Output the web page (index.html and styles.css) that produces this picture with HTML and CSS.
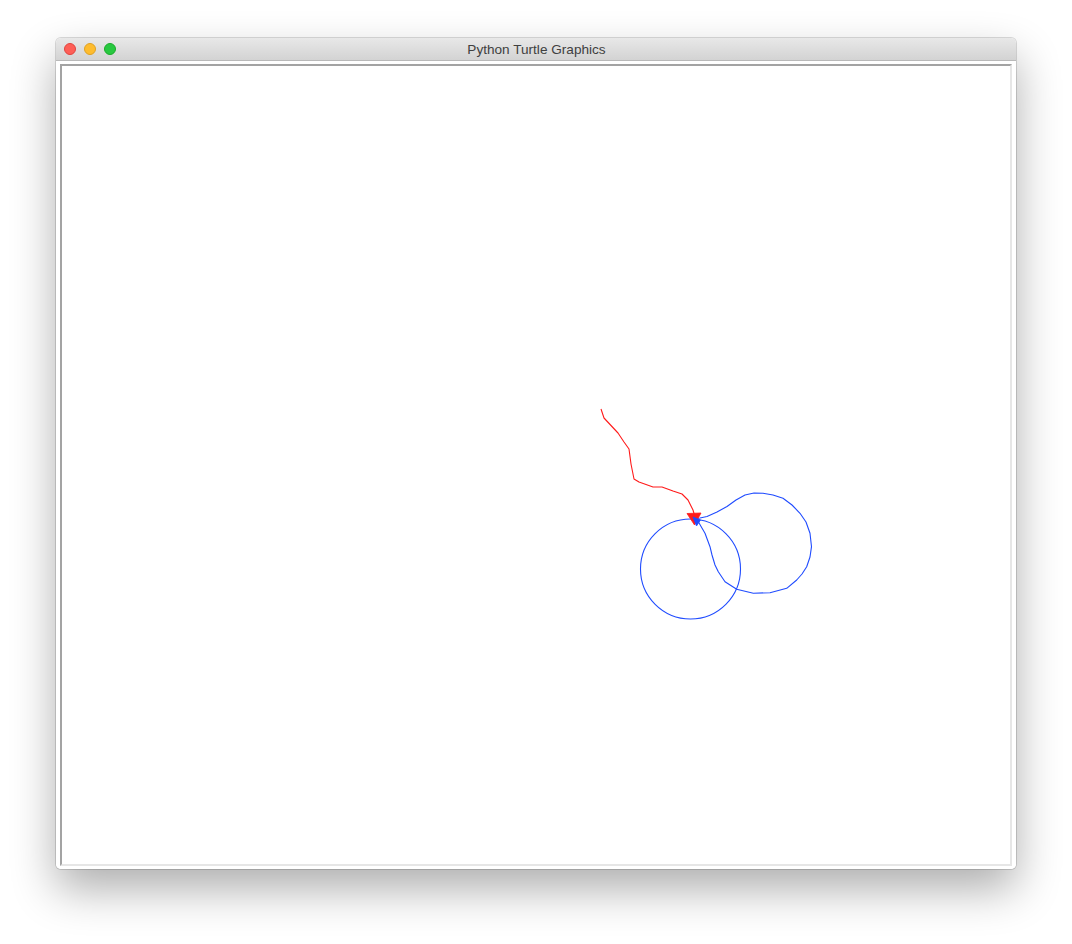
FILE: index.html
```html
<!DOCTYPE html>
<html>
<head>
<meta charset="utf-8">
<link rel="stylesheet" href="styles.css">
</head>
<body>
<div class="window">
  <div class="titlebar">
    <div class="lights">
      <span class="light close"></span>
      <span class="light min"></span>
      <span class="light max"></span>
    </div>
    <div class="title">Python Turtle Graphics</div>
  </div>
  <div class="body">
    <div class="canvas">
      <svg class="drawing" width="948" height="799" viewBox="62 65 948 799" xmlns="http://www.w3.org/2000/svg">
        <polyline class="red" points="601,409 604,418 618,433 624,442 629,449 631,464 634,479 639,482 653,487 662,487 673,491 682,494 688,500 693,510 695,517"/>
        <circle class="blue" cx="690.5" cy="569" r="50"/>
        <polyline class="blue" points="694,519 700,518 707,516.5 717,512 727,506.5 736,500 745,495 754,493 763,493.3 773,495 783,498.3 792,505 800,513.3 806,522 810,533.3 811.5,546.7 810,557 806.7,566.7 802,574 796.7,580 786.7,588.3 770,592.7 753.3,593.3 736.7,589.3 725,581.7 718.3,571.7 715,565 712,555 710,546.7 705,533.3 698.3,521.7"/>
        <polygon class="redfill" points="687,513.5 701,513 694.5,525"/>
        <polygon class="bluefill" points="693,517 700.5,520 696.5,526"/>
      </svg>
    </div>
  </div>
</div>
</body>
</html>
```

FILE: styles.css
```css
html, body {
  margin: 0;
  padding: 0;
  background: #ffffff;
}
body {
  padding: 38px 0 0 56px;
  height: 944px;
  box-sizing: border-box;
  overflow: hidden;
}
.window {
  width: 960px;
  height: 831px;
  border-radius: 5px;
  background: #ffffff;
  box-shadow: 0 20px 45px rgba(0, 0, 0, 0.32), 0 0 0 1px rgba(0, 0, 0, 0.14);
  display: flex;
  flex-direction: column;
  overflow: hidden;
}
.titlebar {
  height: 22px;
  flex: none;
  background: linear-gradient(#e8e8e8, #d3d3d3);
  border-bottom: 1px solid #b9b9b9;
  display: flex;
  align-items: center;
  position: relative;
}
.lights {
  display: flex;
  gap: 8px;
  padding-left: 8px;
  position: absolute;
  left: 0;
  top: 5px;
}
.light {
  width: 12px;
  height: 12px;
  border-radius: 50%;
  box-sizing: border-box;
}
.close { background: #fe5f57; border: 1px solid #e0443e; }
.min { background: #febc2e; border: 1px solid #dea123; }
.max { background: #28c840; border: 1px solid #1aab29; }
.title {
  flex: 1;
  text-align: center;
  font-family: "Liberation Sans", Arial, sans-serif;
  font-size: 13.6px;
  color: #404040;
  line-height: 22px;
  padding-top: 1px;
  padding-left: 1px;
}
.body {
  flex: 1;
  display: flex;
  padding: 3px 4px 3px 4px;
  background: #ffffff;
}
.canvas {
  flex: 1;
  border-style: solid;
  border-width: 2px;
  border-color: #a3a3a3 #e6e6e6 #e6e6e6 #a3a3a3;
  background: #ffffff;
  overflow: hidden;
}
.drawing {
  display: block;
  margin-top: -1px;
}
.red {
  fill: none;
  stroke: #ff1a1a;
  stroke-width: 1.1;
  stroke-linejoin: round;
}
.redfill {
  fill: #ff1a1a;
  stroke: #ff1a1a;
  stroke-width: 0.8;
}
.blue {
  fill: none;
  stroke: #1f4bff;
  stroke-width: 1.1;
  stroke-linejoin: round;
}
.bluefill {
  fill: #1f4bff;
  stroke: #1f4bff;
  stroke-width: 0.8;
}
```
